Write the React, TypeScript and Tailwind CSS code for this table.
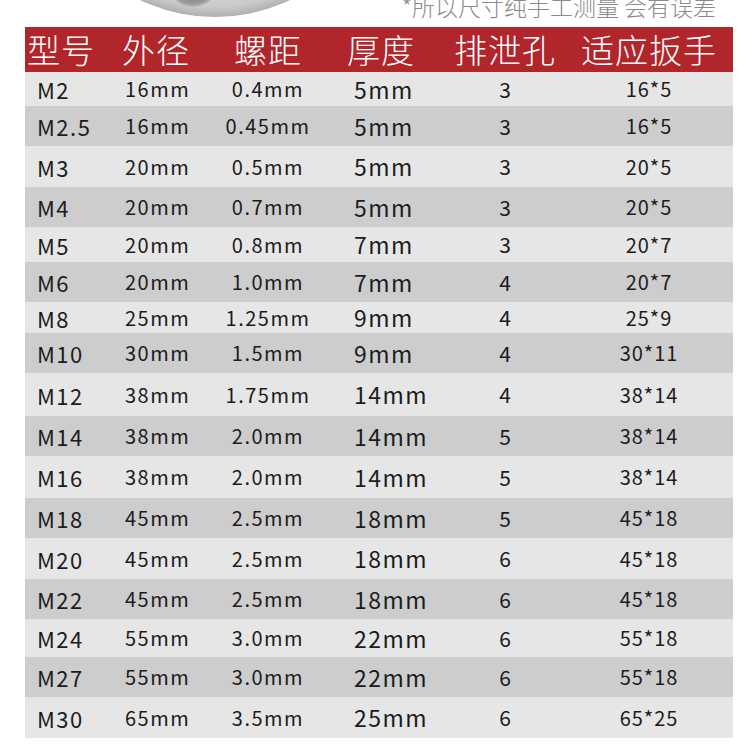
const FONT = { fontFamily: '"Noto Sans CJK SC", "Noto Sans", sans-serif' };

interface Row {
  model: string;
  outer: string;
  pitch: string;
  thick: string;
  holes: string;
  wrench: string;
  h: number;
}

// Row heights follow the source picture, which is not evenly spaced.
const ROWS: Row[] = [
  { model: "M2", outer: "16mm", pitch: "0.4mm", thick: "5mm", holes: "3", wrench: "16*5", h: 34 },
  { model: "M2.5", outer: "16mm", pitch: "0.45mm", thick: "5mm", holes: "3", wrench: "16*5", h: 40 },
  { model: "M3", outer: "20mm", pitch: "0.5mm", thick: "5mm", holes: "3", wrench: "20*5", h: 41 },
  { model: "M4", outer: "20mm", pitch: "0.7mm", thick: "5mm", holes: "3", wrench: "20*5", h: 40 },
  { model: "M5", outer: "20mm", pitch: "0.8mm", thick: "7mm", holes: "3", wrench: "20*7", h: 35 },
  { model: "M6", outer: "20mm", pitch: "1.0mm", thick: "7mm", holes: "4", wrench: "20*7", h: 40 },
  { model: "M8", outer: "25mm", pitch: "1.25mm", thick: "9mm", holes: "4", wrench: "25*9", h: 31 },
  { model: "M10", outer: "30mm", pitch: "1.5mm", thick: "9mm", holes: "4", wrench: "30*11", h: 40 },
  { model: "M12", outer: "38mm", pitch: "1.75mm", thick: "14mm", holes: "4", wrench: "38*14", h: 43 },
  { model: "M14", outer: "38mm", pitch: "2.0mm", thick: "14mm", holes: "5", wrench: "38*14", h: 40 },
  { model: "M16", outer: "38mm", pitch: "2.0mm", thick: "14mm", holes: "5", wrench: "38*14", h: 42 },
  { model: "M18", outer: "45mm", pitch: "2.5mm", thick: "18mm", holes: "5", wrench: "45*18", h: 40 },
  { model: "M20", outer: "45mm", pitch: "2.5mm", thick: "18mm", holes: "6", wrench: "45*18", h: 41 },
  { model: "M22", outer: "45mm", pitch: "2.5mm", thick: "18mm", holes: "6", wrench: "45*18", h: 40 },
  { model: "M24", outer: "55mm", pitch: "3.0mm", thick: "22mm", holes: "6", wrench: "55*18", h: 38 },
  { model: "M27", outer: "55mm", pitch: "3.0mm", thick: "22mm", holes: "6", wrench: "55*18", h: 40 },
  { model: "M30", outer: "65mm", pitch: "3.5mm", thick: "25mm", holes: "6", wrench: "65*25", h: 41 },
];

const GRID = "grid grid-cols-[90px_100px_106px_124px_120px_168px] items-center";

function Disk() {
  return (
    <svg width="180" height="27" viewBox="125 0 180 27" className="block">
      <defs>
        <radialGradient id="disk" cx="215" cy="-157" r="174" gradientUnits="userSpaceOnUse">
          <stop offset="0.8" stopColor="#d9d9d9" />
          <stop offset="0.94" stopColor="#cbcbcb" />
          <stop offset="1" stopColor="#b0b0b0" />
        </radialGradient>
        <radialGradient id="hole" cx="193" cy="-20" r="27" gradientUnits="userSpaceOnUse">
          <stop offset="0.55" stopColor="#7e7e7e" />
          <stop offset="0.9" stopColor="#9d9d9d" />
          <stop offset="1" stopColor="#bdbdbd" />
        </radialGradient>
      </defs>
      <circle cx="215" cy="-157" r="174" fill="url(#disk)" />
      <circle cx="193" cy="-20" r="27" fill="url(#hole)" />
    </svg>
  );
}

export default function App() {
  return (
    <div className="w-[750px] h-[750px] bg-white overflow-hidden" style={FONT}>
      <div className="flex h-[27px] overflow-hidden">
        <div className="ml-[125px]">
          <Disk />
        </div>
        <span className="ml-auto mr-[34px] -mt-[5px] text-[23px] leading-none font-light text-[#8a8a8a] whitespace-nowrap">
          *所以尺寸纯手工测量 会有误差
        </span>
      </div>

      <div className="ml-[25px] w-[708px]">
        <div className={`${GRID} h-[45px] bg-[#b0262b] text-white text-[33px] font-light leading-none tracking-[1px]`}>
          <span className="pl-[2px]">型号</span>
          <span className="pl-[7px]">外径</span>
          <span className="text-center">螺距</span>
          <span className="pl-[26px]">厚度</span>
          <span className="text-center">排泄孔</span>
          <span className="text-center">适应扳手</span>
        </div>

        {ROWS.map((r, i) => (
          <div
            key={r.model}
            className={`${GRID} text-[#1c1c1c] leading-none ${i % 2 === 0 ? "bg-[#e6e6e6]" : "bg-[#cdcdcd]"}`}
            style={{ height: r.h }}
          >
            <span className="pl-[12px] text-[22px] tracking-[1.5px]">{r.model}</span>
            <span className="pl-[10px] text-[20px] tracking-[1.5px]">{r.outer}</span>
            <span className="text-center text-[20px] tracking-[1.5px]">{r.pitch}</span>
            <span className="pl-[33px] text-[23px] tracking-[1.5px]">{r.thick}</span>
            <span className="text-center text-[21px]">{r.holes}</span>
            <span className="text-center text-[20px] tracking-[1px]">{r.wrench}</span>
          </div>
        ))}
      </div>
    </div>
  );
}
